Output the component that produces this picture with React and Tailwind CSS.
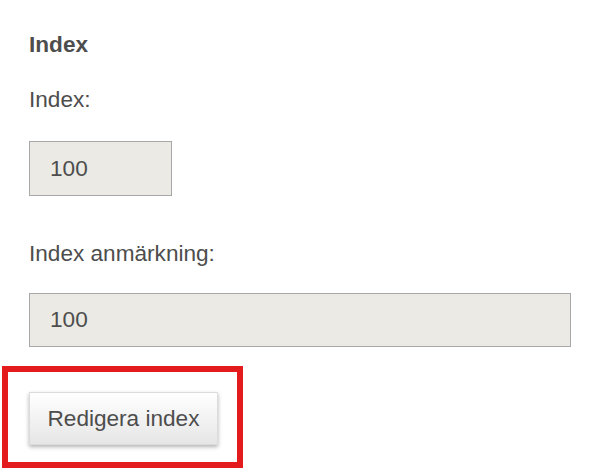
export default function App() {
  return (
    <div className="relative w-[599px] h-[472px] bg-white text-[#4d4d4d] font-['Liberation_Sans',Arial,sans-serif] text-[22.6px] leading-[26px] px-[29px] pt-[32px]">
      <h2 className="font-bold">Index</h2>

      <label className="block mt-[29px]">Index:</label>
      <div className="mt-[28px] w-[143px] h-[55px] border border-[#a8a8a8] bg-[#ebeae4] flex items-center px-[20px]">
        100
      </div>

      <label className="block mt-[45px]">Index anmärkning:</label>
      <div className="mt-[26px] w-[542px] h-[54px] border border-[#a8a8a8] bg-[#ebeae4] flex items-center px-[20px]">
        100
      </div>

      <button className="mt-[45px] w-[189px] h-[53px] flex items-center justify-center bg-gradient-to-b from-white to-[#e6e6e6] border border-[#dcdcdc] shadow-[0_2px_4px_rgba(0,0,0,0.3)] text-[#4d4d4d]">
        Redigera index
      </button>

      {/* annotation box around the button */}
      <div className="absolute left-[2px] top-[366px] w-[241px] h-[102px] border-[6px] border-[#e31b1d] pointer-events-none" />
    </div>
  );
}
